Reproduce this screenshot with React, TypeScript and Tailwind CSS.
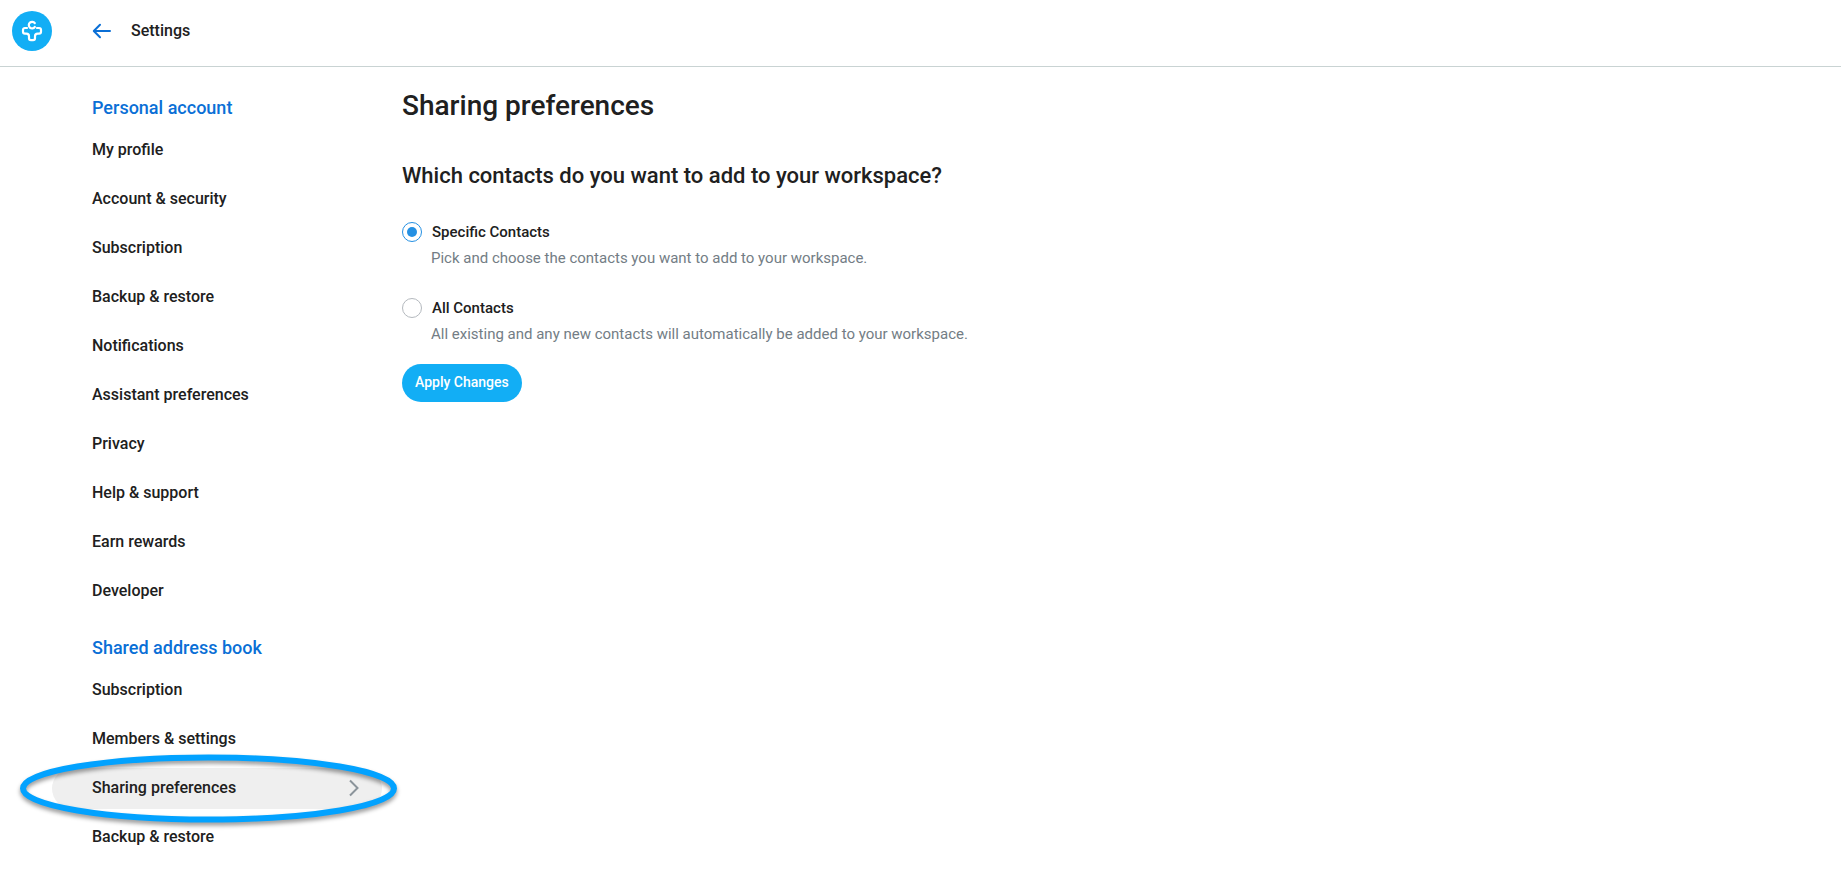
import { useState } from "react";
import { clsx } from "clsx";

type NavGroup = { title: string; items: string[] };

const GROUPS: NavGroup[] = [
  {
    title: "Personal account",
    items: [
      "My profile",
      "Account & security",
      "Subscription",
      "Backup & restore",
      "Notifications",
      "Assistant preferences",
      "Privacy",
      "Help & support",
      "Earn rewards",
      "Developer",
    ],
  },
  {
    title: "Shared address book",
    items: ["Subscription", "Members & settings", "Sharing preferences", "Backup & restore"],
  },
];

const OPTIONS = [
  {
    id: "specific",
    label: "Specific Contacts",
    text: "Pick and choose the contacts you want to add to your workspace.",
  },
  {
    id: "all",
    label: "All Contacts",
    text: "All existing and any new contacts will automatically be added to your workspace.",
  },
];

function Logo() {
  return (
    <svg viewBox="0 0 40 40" className="h-10 w-10" aria-hidden="true">
      <circle cx="20" cy="20" r="20" fill="#12aef5" />
      <g fill="none" stroke="#fff" strokeWidth="2.2" strokeLinecap="round" strokeLinejoin="round">
        <path d="M22.8 12.2a3.3 3.3 0 1 0 0 3.800" />
        <path d="M15 17h-2.100a1.900 1.900 0 0 0-1.900 1.900v1.900a1.900 1.900 0 0 0 1.900 1.900h1.500c1.600 0 2.600 1 2.600 2.600v2a1.900 1.900 0 0 0 1.900 1.900h2.200a1.900 1.900 0 0 0 1.900-1.900v-2c0-1.600 1-2.600 2.600-2.600h1.500a1.900 1.900 0 0 0 1.900-1.900v-1.900a1.900 1.900 0 0 0-1.900-1.900H25" />
      </g>
    </svg>
  );
}

// Hand-drawn style ring around the highlighted entry, wider than the row itself.
function Ring() {
  return (
    <svg
      viewBox="0 0 378 70"
      className="pointer-events-none absolute -top-4 -left-8 h-[70px] w-[378px] overflow-visible drop-shadow-[0_3px_2px_rgba(0,0,0,0.4)]"
      aria-hidden="true"
    >
      <ellipse cx="188.500" cy="36.500" rx="185.500" ry="31" fill="none" stroke="#02a2ff" strokeWidth="6" />
    </svg>
  );
}

function NavItem({ label, active }: { label: string; active: boolean }) {
  return (
    <li className="relative">
      <a
        href="#"
        aria-current={active ? "page" : undefined}
        className={clsx(
          "flex h-[41px] items-center justify-between rounded-full pr-[23px] pb-0.5 pl-10 text-base font-medium",
          active && "bg-[#efefef]",
        )}
      >
        {label}
        {active && (
          <svg viewBox="0 0 10 18" className="h-[18px] w-[10px]" aria-hidden="true">
            <path d="M1 1.5 8.5 9 1 16.5" fill="none" stroke="#8b949b" strokeWidth="2" />
          </svg>
        )}
      </a>
      {active && <Ring />}
    </li>
  );
}

export default function App() {
  const [choice, setChoice] = useState("specific");

  return (
    <div className="min-h-screen bg-white font-[Roboto,sans-serif] text-[#202020]">
      <header className="flex h-[67px] items-center border-b border-[#c9d3d3] pb-1 pl-3">
        <a href="#" aria-label="Home">
          <Logo />
        </a>
        <button type="button" aria-label="Back" className="ml-10">
          <svg viewBox="0 0 20 16" className="h-4 w-5" aria-hidden="true">
            <path
              d="M18 8H2.5M8 1.8 1.8 8 8 14.2"
              fill="none"
              stroke="#0a6fd6"
              strokeWidth="2"
              strokeLinecap="round"
              strokeLinejoin="round"
            />
          </svg>
        </button>
        <span className="ml-[19px] text-base font-medium">Settings</span>
      </header>

      <div className="flex gap-5 pl-[52px]">
        <nav className="flex w-[330px] shrink-0 flex-col gap-6 pt-[29px] pb-4">
          {GROUPS.map((g) => (
            <section key={g.title}>
              <h2 className="mb-2.5 pl-10 text-lg leading-6 font-medium text-[#0a6fd6]">{g.title}</h2>
              <ul className="flex flex-col gap-2">
                {g.items.map((item) => (
                  <NavItem key={item} label={item} active={item === "Sharing preferences"} />
                ))}
              </ul>
            </section>
          ))}
        </nav>

        <main className="min-w-0 flex-1 pt-[21px]">
          <h1 className="text-[28px] leading-9 font-medium">Sharing preferences</h1>
          <form className="mt-9" onSubmit={(e) => e.preventDefault()}>
            <fieldset>
              <legend className="text-[22px] leading-8 font-medium">
                Which contacts do you want to add to your workspace?
              </legend>
              <div className="mt-7 flex flex-col gap-[26px]">
                {OPTIONS.map((o) => (
                  <div key={o.id}>
                    <div className="flex items-center gap-2.5">
                      <input
                        type="radio"
                        id={o.id}
                        name="sharing"
                        checked={choice === o.id}
                        onChange={() => setChoice(o.id)}
                        aria-describedby={`${o.id}-text`}
                        className="h-5 w-5 appearance-none rounded-full border border-[#b4b9be] bg-clip-content p-1 checked:border-[#2490e3] checked:bg-[#2490e3]"
                      />
                      <label htmlFor={o.id} className="text-[15px] leading-6 font-medium">
                        {o.label}
                      </label>
                    </div>
                    <p id={`${o.id}-text`} className="mt-0.5 pl-[29px] text-[15px] leading-6 text-[#737d85]">
                      {o.text}
                    </p>
                  </div>
                ))}
              </div>
            </fieldset>
            <button
              type="submit"
              className="mt-[18px] flex h-[38px] items-center rounded-full bg-[#12aef5] px-[13px] pb-0.5 text-sm font-medium text-white"
            >
              Apply Changes
            </button>
          </form>
        </main>
      </div>
    </div>
  );
}
